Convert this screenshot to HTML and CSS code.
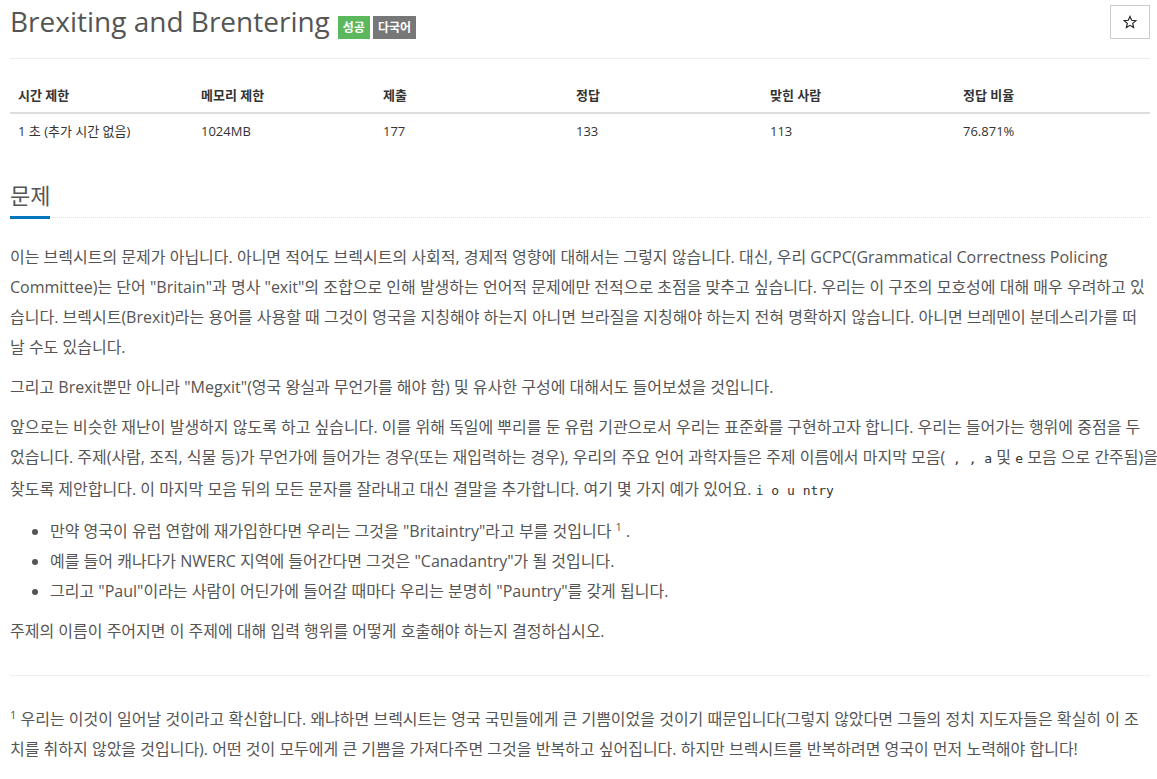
FILE: index.html
```html
<!DOCTYPE html>
<html lang="ko">
<head>
<meta charset="utf-8">
<title>Brexiting and Brentering</title>
<link rel="stylesheet" href="styles.css">
</head>
<body>
<div class="page">
  <div class="page-header">
    <h1 class="title">
      <span class="title-text">Brexiting and Brentering</span>
      <span class="label label-success">성공</span>
      <span class="label label-default">다국어</span>
    </h1>
    <button class="star-btn" type="button" aria-label="즐겨찾기">
      <svg class="star-icon" width="14" height="14" viewBox="0 0 24 24" aria-hidden="true">
        <path d="M12 2.5l2.9 6.6 7.1.6-5.4 4.7 1.6 7-6.2-3.7-6.2 3.7 1.6-7L2 9.7l7.1-.6z" fill="none" stroke="#222" stroke-width="2" stroke-linejoin="miter"/>
      </svg>
    </button>
  </div>

  <table class="info">
    <thead>
      <tr>
        <th class="c1">시간 제한</th>
        <th class="c2">메모리 제한</th>
        <th class="c3">제출</th>
        <th class="c4">정답</th>
        <th class="c5">맞힌 사람</th>
        <th class="c6">정답 비율</th>
      </tr>
    </thead>
    <tbody>
      <tr>
        <td>1 초 (추가 시간 없음)</td>
        <td>1024MB</td>
        <td>177</td>
        <td>133</td>
        <td>113</td>
        <td>76.871%</td>
      </tr>
    </tbody>
  </table>

  <section class="problem">
    <div class="headline"><h2>문제</h2></div>
    <div class="problem-text">
      <p>이는 브렉시트의 문제가 아닙니다. 아니면 적어도 브렉시트의 사회적, 경제적 영향에 대해서는 그렇지 않습니다. 대신, 우리 GCPC(Grammatical Correctness Policing<br>Committee)는 단어 "Britain"과 명사 "exit"의 조합으로 인해 발생하는 언어적 문제에만 전적으로 초점을 맞추고 싶습니다. 우리는 이 구조의 모호성에 대해 매우 우려하고 있<br>습니다. 브렉시트(Brexit)라는 용어를 사용할 때 그것이 영국을 지칭해야 하는지 아니면 브라질을 지칭해야 하는지 전혀 명확하지 않습니다. 아니면 브레멘이 분데스리가를 떠<br>날 수도 있습니다.</p>
      <p>그리고 Brexit뿐만 아니라 "Megxit"(영국 왕실과 무언가를 해야 함) 및 유사한 구성에 대해서도 들어보셨을 것입니다.</p>
      <p>앞으로는 비슷한 재난이 발생하지 않도록 하고 싶습니다. 이를 위해 독일에 뿌리를 둔 유럽 기관으로서 우리는 표준화를 구현하고자 합니다. 우리는 들어가는 행위에 중점을 두<br>었습니다. 주제(사람, 조직, 식물 등)가 무언가에 들어가는 경우(또는 재입력하는 경우), 우리의 주요 언어 과학자들은 주제 이름에서 마지막 모음(<code> , , a</code> 및 <code>e</code> 모음 으로 간주됨)을<br>찾도록 제안합니다. 이 마지막 모음 뒤의 모든 문자를 잘라내고 대신 결말을 추가합니다. 여기 몇 가지 예가 있어요. <code>i o u ntry</code></p>
      <ul>
        <li>만약 영국이 유럽 연합에 재가입한다면 우리는 그것을 "Britaintry"라고 부를 것입니다 <sup>1</sup> .</li>
        <li>예를 들어 캐나다가 NWERC 지역에 들어간다면 그것은 "Canadantry"가 될 것입니다.</li>
        <li>그리고 "Paul"이라는 사람이 어딘가에 들어갈 때마다 우리는 분명히 "Pauntry"를 갖게 됩니다.</li>
      </ul>
      <p>주제의 이름이 주어지면 이 주제에 대해 입력 행위를 어떻게 호출해야 하는지 결정하십시오.</p>
      <hr class="footnote-rule">
      <p class="footnote"><sup>1</sup> 우리는 이것이 일어날 것이라고 확신합니다. 왜냐하면 브렉시트는 영국 국민들에게 큰 기쁨이었을 것이기 때문입니다(그렇지 않았다면 그들의 정치 지도자들은 확실히 이 조<br>치를 취하지 않았을 것입니다). 어떤 것이 모두에게 큰 기쁨을 가져다주면 그것을 반복하고 싶어집니다. 하지만 브렉시트를 반복하려면 영국이 먼저 노력해야 합니다!</p>
    </div>
  </section>
</div>
</body>
</html>
```

FILE: styles.css
```css
html, body {
  margin: 0;
  padding: 0;
  background: #fff;
}

body {
  font-family: "Open Sans", "Noto Sans CJK KR", sans-serif;
  color: #555;
}

.page {
  width: 1140px;
  padding: 0 7px 0 10px;
}

.page-header {
  display: flex;
  justify-content: space-between;
  align-items: flex-start;
  height: 56px;
  padding-top: 2px;
  border-bottom: 1px solid #eee;
}

.title {
  display: flex;
  align-items: flex-start;
  margin: 0;
  font-size: 28px;
  line-height: 38px;
  font-weight: 400;
  color: #555;
}

.title-text {
  margin-right: 8px;
}

.label {
  display: inline-block;
  margin-top: 14px;
  margin-right: 3px;
  height: 23px;
  padding: 0 5px;
  font-size: 12px;
  line-height: 23px;
  font-weight: 700;
  color: #fff;
}

.label-success {
  background: #5cb85c;
}

.label-default {
  background: #777;
}

.star-btn {
  display: flex;
  align-items: center;
  justify-content: center;
  margin-top: 3px;
  width: 40px;
  height: 34px;
  padding: 0;
  background: #fff;
  border: 1px solid #ccc;
  border-radius: 0;
}

.star-icon {
  display: block;
  margin-bottom: 1px;
}

.info {
  width: 100%;
  margin-top: 19px;
  border-collapse: collapse;
  font-size: 13px;
  color: #333;
}

.info th, .info td {
  text-align: left;
  padding: 8px;
  line-height: 18px;
}

.info th {
  font-weight: 700;
  border-bottom: 2px solid #ddd;
}

.c1 { width: 167px; }
.c2 { width: 166px; }
.c3 { width: 177px; }
.c4 { width: 178px; }
.c5 { width: 177px; }

.problem {
  margin-top: 32px;
}

.headline {
  border-bottom: 1px dotted #e0e0e0;
}

.headline h2 {
  display: inline-block;
  margin: 0 0 -2px;
  padding-bottom: 6px;
  font-size: 22px;
  line-height: 30px;
  font-weight: 400;
  color: #555;
  border-bottom: 3px solid #0076c0;
}

.problem-text {
  margin-top: 24px;
  font-size: 16px;
  line-height: 30px;
  color: #555;
  white-space: nowrap;
}

.problem-text p {
  margin: 0 0 10px;
}

.problem-text code {
  font-family: "DejaVu Sans Mono", monospace;
  font-size: 13px;
  color: #333;
}

.problem-text ul {
  margin: 0 0 10px;
  padding-left: 40px;
}

.problem-text sup {
  font-size: 11px;
  line-height: 0;
}

.footnote-rule {
  margin: 29px 0 28px;
  border: 0;
  border-top: 1px solid #eee;
}
```
